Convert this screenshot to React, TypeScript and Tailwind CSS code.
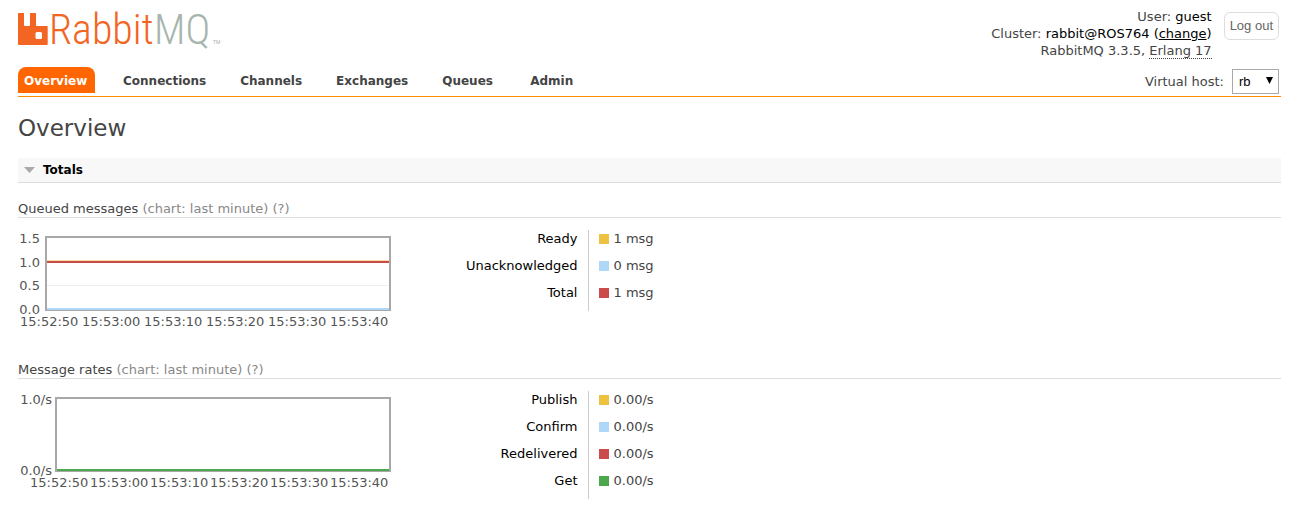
import React from "react";

const tabs = ["Overview", "Connections", "Channels", "Exchanges", "Queues", "Admin"];

type Stat = { label: string; value: string; swatch: string };

const queued: Stat[] = [
  { label: "Ready", value: "1 msg", swatch: "bg-[#edc240]" },
  { label: "Unacknowledged", value: "0 msg", swatch: "bg-[#afd8f8]" },
  { label: "Total", value: "1 msg", swatch: "bg-[#cb4b4b]" },
];

const rates: Stat[] = [
  { label: "Publish", value: "0.00/s", swatch: "bg-[#edc240]" },
  { label: "Confirm", value: "0.00/s", swatch: "bg-[#afd8f8]" },
  { label: "Redelivered", value: "0.00/s", swatch: "bg-[#cb4b4b]" },
  { label: "Get", value: "0.00/s", swatch: "bg-[#4da74d]" },
];

const times = ["15:52:50", "15:53:00", "15:53:10", "15:53:20", "15:53:30", "15:53:40"];

function Logo() {
  return (
    <a href="#" aria-label="RabbitMQ" className="block">
      <svg width="212" height="60" viewBox="0 -8 212 60">
        <path
          fillRule="evenodd"
          fill="#f26522"
          d="M.5 5h5q.5 0 .5.500V17q0 1 1 1h4q1 0 1-1V5.500q0-.500.500-.500h5q.500 0 .500.500V17q0 1 1 1h10q.700 0 .700.700V36.300q0 .700-.700.700H.700Q0 37 0 36.300V5.500Q0 5 .500 5zM19 24q-1.500 0-1.500 1.500v4q0 1.500 1.500 1.500h3.500q1.500 0 1.500-1.500v-4q0-1.500-1.500-1.500z"
        />
        <g fontSize="42" fontWeight="300" fontFamily="'Roboto Condensed', Roboto, sans-serif">
          <text x="31" y="36" fill="#f26522">Rabbit</text>
          <text x="136" y="36" fill="#a7b5ae">MQ</text>
        </g>
        <text x="195" y="36" fontSize="5" fill="#a7b5ae" fontFamily="Roboto, sans-serif">
          TM
        </text>
      </svg>
    </a>
  );
}

function QueuedChart() {
  return (
    <svg width="376" height="104" viewBox="0 0 376 104" fontSize="13" fill="#545454">
      <line x1="28" x2="372" y1="57.5" y2="57.5" stroke="#eee" />
      <line x1="28" x2="372" y1="33" y2="33" stroke="#edc240" strokeWidth="2" opacity="0.5" />
      <line x1="28" x2="372" y1="34" y2="34" stroke="#cb4b4b" strokeWidth="2" />
      <rect x="28" y="9" width="344" height="73" fill="none" stroke="#a8a8a8" strokeWidth="2" />
      <rect x="29" y="80" width="342" height="2" fill="#afd8f8" />
      <g textAnchor="end">
        <text x="22" y="15">1.5</text>
        <text x="22" y="39">1.0</text>
        <text x="22" y="62">0.5</text>
        <text x="22" y="86">0.0</text>
      </g>
      {times.map((time, i) => (
        <text key={time} x={2 + i * 62} y="98">
          {time}
        </text>
      ))}
    </svg>
  );
}

function RatesChart() {
  return (
    <svg width="376" height="104" viewBox="0 0 376 104" fontSize="13" fill="#545454">
      <rect x="38" y="9" width="334" height="73" fill="none" stroke="#a8a8a8" strokeWidth="2" />
      <rect x="39" y="80" width="332" height="2" fill="#4da74d" />
      <g textAnchor="end">
        <text x="34" y="15">1.0/s</text>
        <text x="34" y="86">0.0/s</text>
      </g>
      {times.map((time, i) => (
        <text key={time} x={12 + i * 60} y="98">
          {time}
        </text>
      ))}
    </svg>
  );
}

function StatTable({ stats }: { stats: Stat[] }) {
  return (
    <table className="mt-3 ml-14">
      <tbody>
        {stats.map((s) => (
          <tr key={s.label} className="h-[27px] align-top">
            <th scope="row" className="w-[138px] border-r border-[#ccc] pt-px pr-2.5 text-right font-normal text-black">
              {s.label}
            </th>
            <td className="pt-px pl-2.5">
              <span className="flex items-center gap-[5px]">
                <span className={`size-2.5 ${s.swatch}`} />
                {s.value}
              </span>
            </td>
          </tr>
        ))}
      </tbody>
    </table>
  );
}

function Panel({ title, stats, children }: { title: string; stats: Stat[]; children: React.ReactNode }) {
  return (
    <section>
      <h3 className="border-b border-[#ddd] leading-4">
        {title} <span className="text-[#888]">(chart: last minute) (?)</span>
      </h3>
      <div className="flex items-start">
        <div className="pt-2.5">{children}</div>
        <StatTable stats={stats} />
      </div>
    </section>
  );
}

export default function App() {
  return (
    <div className="bg-white pr-[17px] pl-[18px] font-['DejaVu_Sans',sans-serif] text-[13px] leading-4 text-[#444]">
      <header>
        <div className="flex h-[67px] items-start justify-between">
          <Logo />
          <div className="flex items-start gap-3 pt-2 pr-0.5">
            <ul className="text-right leading-[17px]">
              <li>
                User: <span className="text-black">guest</span>
              </li>
              <li>
                Cluster:{" "}
                <span className="text-black">
                  rabbit@ROS764 (<a href="#" className="underline">change</a>)
                </span>
              </li>
              <li>
                RabbitMQ 3.3.5, <abbr title="Erlang R17" className="border-b border-dotted border-[#444] no-underline">Erlang 17</abbr>
              </li>
            </ul>
            <button className="mt-1 h-7 rounded-md border border-[#ddd] px-[5px] font-['Liberation_Sans',sans-serif] text-[#666]">
              Log out
            </button>
          </div>
        </div>
        <nav className="flex items-start justify-between border-b border-[#ff8c00]">
          <ul className="flex gap-[22px] pb-[3px] text-xs font-bold">
            {tabs.map((tab, i) => (
              <li key={tab}>
                <a
                  href="#"
                  className={`block h-[26px] min-w-[66px] px-1.5 leading-7 ${i === 0 ? "w-[77px] rounded-t-lg bg-[#ff6600] text-white" : "text-[#444]"}`}
                >
                  {tab}
                </a>
              </li>
            ))}
          </ul>
          <label className="flex items-center gap-2 pt-0.5 pr-0.5">
            Virtual host:
            <span className="relative">
              <select className="block h-[25px] w-[47px] appearance-none border border-[#a9a9a9] bg-white pl-1.5 font-['Liberation_Sans',sans-serif] text-black">
                <option>rb</option>
              </select>
              <svg className="pointer-events-none absolute top-2 right-1.5" width="7" height="7" viewBox="0 0 7 7">
                <path d="M0 0h7L3.500 7z" fill="#000" />
              </svg>
            </span>
          </label>
        </nav>
      </header>
      <main>
        <h1 className="pt-[15px] pb-[14px] text-[23px] leading-8">Overview</h1>
        <h2 className="mb-[18px] flex h-[25px] items-center gap-2 border-b border-[#ddd] bg-[#f8f8f8] pl-1.5 text-xs font-bold text-black">
          <svg width="11" height="6" viewBox="0 0 11 6">
            <path d="M0 0h11L5.500 6z" fill="#aaa" />
          </svg>
          Totals
        </h2>
        <div className="flex flex-col gap-[30px]">
          <Panel title="Queued messages" stats={queued}>
            <QueuedChart />
          </Panel>
          <Panel title="Message rates" stats={rates}>
            <RatesChart />
          </Panel>
        </div>
      </main>
    </div>
  );
}
